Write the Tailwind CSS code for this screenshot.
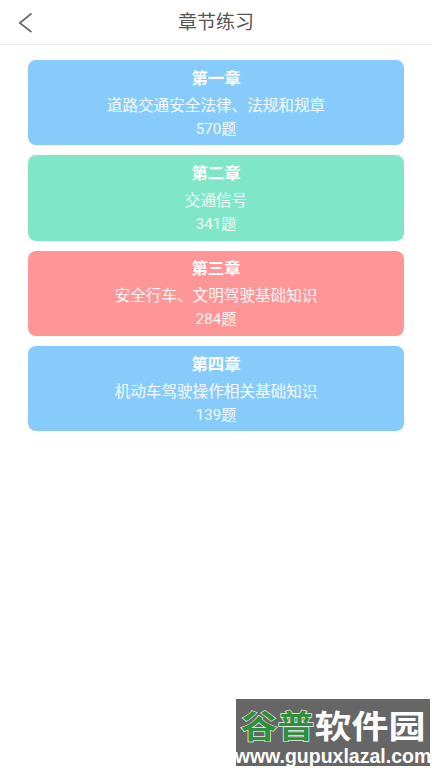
<!DOCTYPE html>
<html lang="zh-CN">

<head>
    <meta charset="UTF-8">
    <meta name="viewport" content="width=device-width, initial-scale=1.0">
    <title>章节练习</title>
    <script src="https://cdn.jsdelivr.net/npm/@tailwindcss/browser@4"></script>
</head>

<body class="bg-white font-['Roboto','Noto_Sans_CJK_SC',sans-serif]">
    <div class="relative h-[768px] w-[432px] overflow-hidden bg-white">
        <header class="relative flex h-[45px] items-center justify-center border-b border-[#ececec]">
            <svg class="absolute left-[18px] top-[12px] h-[22px] w-[15px]" viewBox="0 0 15 22" fill="none">
                <path d="M13.5 1.5 L1.8 11 L13.5 20" stroke="#6b6b6b" stroke-width="1.7" />
            </svg>
            <h1 class="text-[19px] leading-none text-[#555555]">章节练习</h1>
        </header>

        <main class="flex flex-col gap-[10.1px] pl-[28px] pr-[28px] pt-[15px]">
            <a class="flex h-[85.3px] flex-col items-center rounded-[8px] bg-[#87cbfb] pt-[8.5px] text-white">
                <p class="text-[16.4px] font-bold leading-[20px]">第一章</p>
                <p class="mt-[7px] text-[15.6px] leading-[20px] text-white/90">道路交通安全法律、法规和规章</p>
                <p class="mt-[3px] text-[15px] leading-[20px] text-white/90">570题</p>
            </a>
            <a class="flex h-[85.3px] flex-col items-center rounded-[8px] bg-[#80e6c8] pt-[8.5px] text-white">
                <p class="text-[16.4px] font-bold leading-[20px]">第二章</p>
                <p class="mt-[7px] text-[15.6px] leading-[20px] text-white/90">交通信号</p>
                <p class="mt-[3px] text-[15px] leading-[20px] text-white/90">341题</p>
            </a>
            <a class="flex h-[85.3px] flex-col items-center rounded-[8px] bg-[#fe9698] pt-[8.5px] text-white">
                <p class="text-[16.4px] font-bold leading-[20px]">第三章</p>
                <p class="mt-[7px] text-[15.6px] leading-[20px] text-white/90">安全行车、文明驾驶基础知识</p>
                <p class="mt-[3px] text-[15px] leading-[20px] text-white/90">284题</p>
            </a>
            <a class="flex h-[85.3px] flex-col items-center rounded-[8px] bg-[#87cbfb] pt-[8.5px] text-white">
                <p class="text-[16.4px] font-bold leading-[20px]">第四章</p>
                <p class="mt-[7px] text-[15.6px] leading-[20px] text-white/90">机动车驾驶操作相关基础知识</p>
                <p class="mt-[3px] text-[15px] leading-[20px] text-white/90">139题</p>
            </a>
        </main>

        <!-- watermark -->
        <div class="absolute left-[236px] top-[699px] flex h-[67px] w-[194px] flex-col items-center bg-[#666666] font-['Liberation_Sans','Noto_Sans_CJK_SC',sans-serif] font-bold">
            <div class="mt-[11px] flex h-[34px] scale-y-[0.85] items-center text-[37px] leading-none">
                <span class="text-[#2f8f3c] [-webkit-text-stroke:1.5px_#e8efe8] [paint-order:stroke_fill]">谷普</span>
                <span class="text-white">软件园</span>
            </div>
            <div class="mt-[2px] whitespace-nowrap text-[19.5px] leading-[20px] text-white">www.gupuxlazal.com</div>
        </div>
    </div>
</body>

</html>
